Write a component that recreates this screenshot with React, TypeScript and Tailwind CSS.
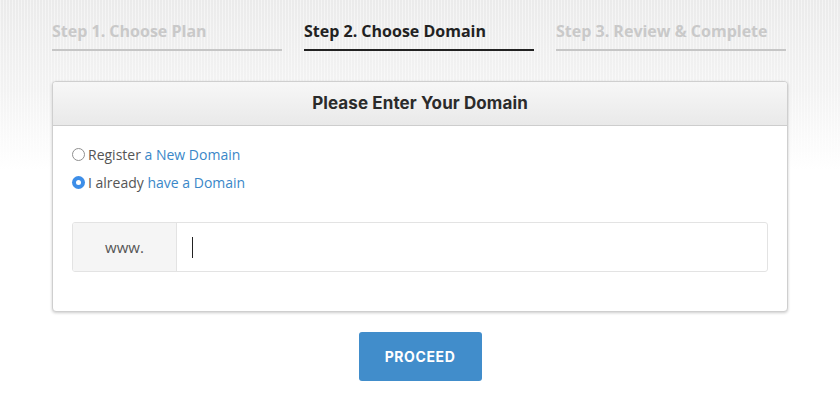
import { useState } from 'react';

const steps = [
  { label: 'Step 1. Choose Plan', active: false },
  { label: 'Step 2. Choose Domain', active: true },
  { label: 'Step 3. Review & Complete', active: false },
];

export default function App() {
  const [mode, setMode] = useState<'register' | 'existing'>('existing');

  return (
    <div className="min-h-[401px] w-full bg-[repeating-linear-gradient(90deg,rgba(255,255,255,0.45)_0px,rgba(255,255,255,0.45)_1px,transparent_1px,transparent_3px),linear-gradient(to_bottom,#ebebeb_0px,#f3f3f3_90px,#ffffff_170px)] font-['Open_Sans',sans-serif]">
      <div className="mx-auto w-[736px]">
        {/* Steps */}
        <div className="flex gap-[22px] pt-[21px]">
          {steps.map(s => (
            <div
              key={s.label}
              className={
                'w-[230px] border-b-2 pb-[8px] text-[16px] font-bold leading-[20px] ' +
                (s.active ? 'border-[#222] text-[#222]' : 'border-[#c6c6c6] text-[#c9c9c9]')
              }
            >
              {s.label}
            </div>
          ))}
        </div>

        {/* Card */}
        <div className="mt-[30px] overflow-hidden rounded-[4px] border border-[#cfcfcf] bg-white shadow-[0_1px_3px_rgba(0,0,0,0.2)]">
          <div className="flex h-[44px] items-center justify-center border-b border-[#cdcdcd] bg-[linear-gradient(to_bottom,#f7f7f7,#e9e9e9)]">
            <h2 className="font-['Inter',sans-serif] text-[17px] font-bold tracking-[0.1px] text-[#2b2b2b]">
              Please Enter Your Domain
            </h2>
          </div>

          <div className="px-[19px] pb-[39px] pt-[16px]">
            <label className="flex h-[24px] cursor-pointer items-center text-[14px] text-[#555]" onClick={() => setMode('register')}>
              <Radio checked={mode === 'register'} />
              <span className="ml-[3px]">
                Register <span className="text-[#3a87c8]">a New Domain</span>
              </span>
            </label>
            <label className="mt-[4px] flex h-[24px] cursor-pointer items-center text-[14px] text-[#555]" onClick={() => setMode('existing')}>
              <Radio checked={mode === 'existing'} />
              <span className="ml-[3px]">
                I already <span className="text-[#3a87c8]">have a Domain</span>
              </span>
            </label>

            <div className="mt-[28px] flex h-[50px] overflow-hidden rounded-[3px] border border-[#e3e3e3]">
              <div className="flex w-[104px] items-center justify-center border-r border-[#e3e3e3] bg-[#f5f5f5] text-[15px] text-[#555]">
                www.
              </div>
              <div className="flex flex-1 items-center pl-[15px]">
                <span className="h-[21px] w-px bg-[#222]" />
              </div>
            </div>
          </div>
        </div>

        {/* Proceed */}
        <div className="mt-[20px] flex justify-center">
          <button className="h-[49px] w-[123px] rounded-[3px] bg-[#418dcb] font-['Inter',sans-serif] text-[14px] font-bold tracking-[0.6px] text-white">
            PROCEED
          </button>
        </div>
      </div>
    </div>
  );
}

function Radio({ checked }: { checked: boolean }) {
  return checked ? (
    <span className="flex h-[13px] w-[13px] items-center justify-center rounded-full bg-[#3d8ee8]">
      <span className="h-[5px] w-[5px] rounded-full bg-white" />
    </span>
  ) : (
    <span className="h-[13px] w-[13px] rounded-full border border-[#8f8f8f] bg-white" />
  );
}
